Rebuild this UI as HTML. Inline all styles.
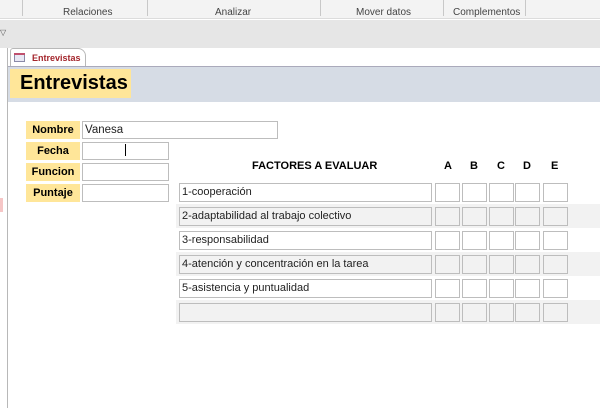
<!DOCTYPE html>
<html><head><meta charset="utf-8"><style>
*{margin:0;padding:0;box-sizing:border-box}
body{width:600px;height:408px;overflow:hidden;background:#fff;font-family:"Liberation Sans",Calibri,sans-serif;position:relative}
.a{position:absolute}
.rib{left:0;top:0;width:600px;height:19px;background:#f3f3f3;border-bottom:1px solid #dcdcdc}
.rl{top:7px;font-size:10px;color:#444}
.sep{top:0;width:1px;height:16px;background:#c8c8c8}
.lbl{background:#ffe699;font-weight:bold;font-size:11px;text-align:center;line-height:18px;height:18px;width:54px;left:26px}
.in{border:1px solid #bdbdbd;background:#fff;height:18px;left:82px;width:87px;font-size:11.5px;line-height:16px;padding-left:2px;color:#222}
.band{left:176px;width:424px;height:24px;background:#f2f2f2}
.tb{border:1px solid #bdbdbd;background:#fff;height:19px;font-size:11px;line-height:17px;padding-left:2px;color:#222}
.g .tb{background:#f2f2f2}
.hd{top:160px;font-size:11px;font-weight:bold}
</style></head><body>
<div class="a rib"></div>
<div class="a sep" style="left:22px"></div>
<div class="a sep" style="left:147px"></div>
<div class="a sep" style="left:320px"></div>
<div class="a sep" style="left:443px"></div>
<div class="a sep" style="left:525px"></div>
<div class="a rl" style="left:63px">Relaciones</div>
<div class="a rl" style="left:215px">Analizar</div>
<div class="a rl" style="left:356px">Mover datos</div>
<div class="a rl" style="left:453px">Complementos</div>
<div class="a" style="left:0;top:20px;width:600px;height:28px;background:#e6e6e6"></div>
<div class="a" style="left:0;top:28px;font-size:8px;color:#555">▽</div>
<div class="a" style="left:7px;top:48px;width:1px;height:360px;background:#b8b8b8"></div>
<div class="a" style="left:0;top:198px;width:3px;height:14px;background:#f6c6c6"></div>
<div class="a" style="left:10px;top:48px;width:76px;height:19px;border:1px solid #b8b8b8;border-bottom:none;border-radius:3px 8px 0 0;background:#fff"></div>
<div class="a" style="left:14px;top:53px;width:11px;height:9px;border:1px solid #8a8aa8;background:#e8e8f4"></div>
<div class="a" style="left:14px;top:53px;width:11px;height:2px;background:#c0506e"></div>
<div class="a" style="left:32px;top:53px;font-size:9px;font-weight:bold;color:#a4262c">Entrevistas</div>
<div class="a" style="left:8px;top:66px;width:592px;height:36px;background:#d6dce5;border-top:1px solid #aab"></div>
<div class="a" style="left:10px;top:69px;width:121px;height:29px;background:#ffe699;font-size:20px;font-weight:bold;padding-left:10px;line-height:29px">Entrevistas</div>

<div class="a lbl" style="top:121px">Nombre</div>
<div class="a lbl" style="top:142px">Fecha</div>
<div class="a lbl" style="top:163px">Funcion</div>
<div class="a lbl" style="top:184px">Puntaje</div>
<div class="a in" style="top:121px;width:196px">Vanesa</div>
<div class="a in" style="top:142px"></div>
<div class="a" style="left:125px;top:144px;width:1px;height:12px;background:#000"></div>
<div class="a in" style="top:163px"></div>
<div class="a in" style="top:184px"></div>

<div class="a hd" style="left:252px">FACTORES A EVALUAR</div>
<div class="a hd" style="left:444px">A</div>
<div class="a hd" style="left:470px">B</div>
<div class="a hd" style="left:497px">C</div>
<div class="a hd" style="left:523px">D</div>
<div class="a hd" style="left:551px">E</div>

<div class="a band" style="top:204px"></div>
<div class="a band" style="top:252px"></div>
<div class="a band" style="top:300px"></div>

<div id="rows"></div>
<script>
var t=["1-cooperación","2-adaptabilidad al trabajo colectivo","3-responsabilidad","4-atención y concentración en la tarea","5-asistencia y puntualidad",""];
var xs=[435,462,489,515,543],h="";
for(var i=0;i<6;i++){var y=183+24*i,g=i%2?"g":"";
h+='<div class="'+g+'"><div class="a tb" style="left:179px;top:'+y+'px;width:253px">'+t[i]+'</div>';
for(var j=0;j<5;j++)h+='<div class="a tb" style="left:'+xs[j]+'px;top:'+y+'px;width:25px"></div>';
h+='</div>';}
document.getElementById("rows").innerHTML=h;
</script>
</body></html>
